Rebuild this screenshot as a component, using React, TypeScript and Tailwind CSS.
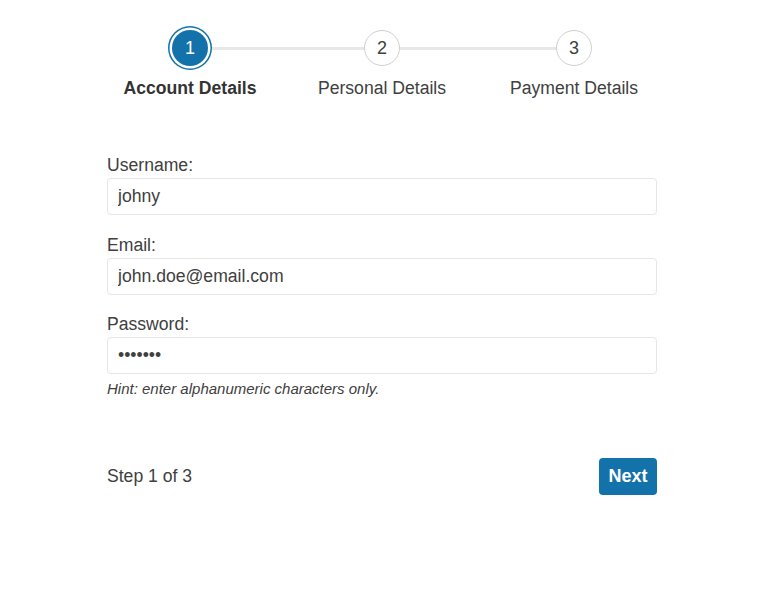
import React from "react";

const steps = ["Account Details", "Personal Details", "Payment Details"];

function Field({ label, value, type = "text" }: { label: string; value: string; type?: string }) {
  return (
    <div className="flex flex-col">
      <label className="text-[17.6px] leading-[26px] text-[#404040]">{label}</label>
      <input
        type={type}
        defaultValue={value}
        readOnly
        className="h-[37px] w-full rounded-[4px] border border-[#e6e6e6] bg-white px-[10px] text-[17.6px] text-[#404040] outline-none"
        style={{ fontFamily: '"Liberation Sans", Arial, sans-serif' }}
      />
    </div>
  );
}

export default function App() {
  return (
    <div
      className="min-h-[602px] w-full bg-white text-[#404040]"
      style={{ fontFamily: '"Liberation Sans", Arial, sans-serif' }}
    >
      <div className="relative ml-[94px] grid w-[576px] grid-cols-3 pt-[30px]">
        <div className="absolute left-[96px] right-[96px] top-[47px] h-[3px] bg-[#e8e8e8]" />
        {steps.map((s, i) => (
          <div key={s} className="relative flex flex-col items-center">
            {i === 0 ? (
              <div className="flex h-9 w-9 items-center justify-center rounded-full bg-[#1472ab] text-[18px] text-white ring-[1.5px] ring-[#1472ab] ring-offset-[2.5px] ring-offset-white">
                1
              </div>
            ) : (
              <div className="flex h-9 w-9 items-center justify-center rounded-full border border-[#cfcfcf] bg-white text-[18px] text-[#404040]">
                {i + 1}
              </div>
            )}
            <div
              className={
                "mt-[9px] text-[17.6px] leading-[26px] " +
                (i === 0 ? "font-bold text-[#333333]" : "text-[#404040]")
              }
            >
              {s}
            </div>
          </div>
        ))}
      </div>

      <div className="ml-[107px] mt-[51px] flex w-[550px] flex-col">
        <Field label="Username:" value="johny" />
        <div className="mt-[17px]">
          <Field label="Email:" value="john.doe@email.com" />
        </div>
        <div className="mt-[16px] flex flex-col">
          <Field label="Password:" value="1234567" type="password" />
          <p className="mt-[4px] text-[15px] italic leading-[22px] text-[#404040]">
            Hint: enter alphanumeric characters only.
          </p>
        </div>

        <div className="mt-[58px] flex items-center justify-between">
          <span className="text-[17.6px] text-[#404040]">Step 1 of 3</span>
          <button className="h-[37px] w-[58px] rounded-[4px] bg-[#1472ab] text-[18px] font-bold text-white">
            Next
          </button>
        </div>
      </div>
    </div>
  );
}
